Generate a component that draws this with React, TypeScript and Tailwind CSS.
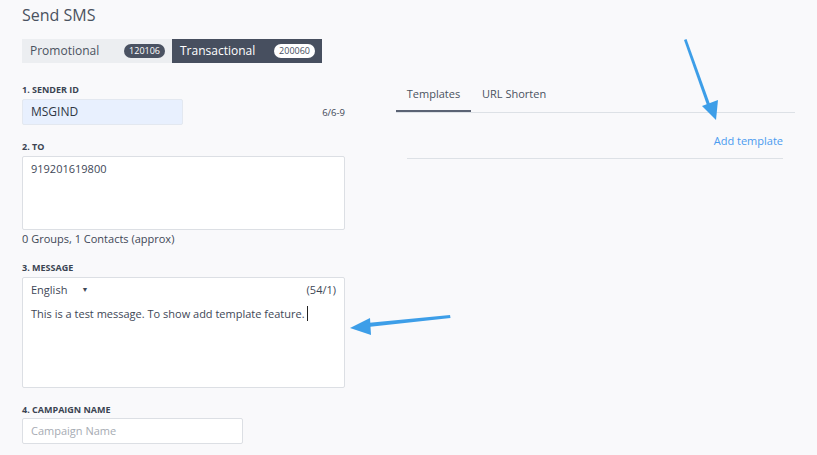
import React from "react";

const font = { fontFamily: '"Open Sans", "Liberation Sans", sans-serif' };

function Label({ children }: { children: React.ReactNode }) {
  return <div className="text-[9px] font-bold uppercase leading-[12px] text-[#3b4452]">{children}</div>;
}

export default function App() {
  return (
    <div style={font} className="relative h-[455px] w-[817px] overflow-hidden bg-[#f9f9fb] text-[#3e4756]">
      <div className="flex">
        {/* left column */}
        <div className="w-[345px] shrink-0 pl-[22px]">
          <h1 className="mt-[3px] text-[16px] leading-[24px] text-[#4a5260]">Send SMS</h1>

          <div className="mt-[12px] flex h-[24px] w-[300px] text-[12px]">
            <div className="flex w-[150px] items-center justify-between bg-[#eceef1] pl-[8px] pr-[7px] text-[#4a5260]">
              <span>Promotional</span>
              <span className="rounded-full bg-[#4a5262] px-[5px] text-[9px] leading-[14px] text-white">120106</span>
            </div>
            <div className="flex w-[150px] items-center justify-between bg-[#474f5f] pl-[8px] pr-[7px] text-white">
              <span>Transactional</span>
              <span className="rounded-full bg-white px-[5px] text-[9px] leading-[14px] text-[#474f5f]">200060</span>
            </div>
          </div>

          <div className="mt-[21px]">
            <Label>1. Sender ID</Label>
          </div>
          <div className="mt-[3px] flex items-center justify-between">
            <div className="flex h-[26px] w-[161px] items-center rounded-[2px] border border-[#e3e8f0] bg-[#e8f0fe] px-[8px] text-[12px] text-[#2f3744]">
              MSGIND
            </div>
            <span className="pt-[2px] text-[9.5px] font-medium text-[#3e4756]">6/6-9</span>
          </div>

          <div className="mt-[16px]">
            <Label>2. TO</Label>
          </div>
          <div className="mt-[3px] h-[74px] w-[323px] rounded-[2px] border border-[#dcdfe4] bg-white px-[8px] py-[5px] text-[11px] leading-[14px] text-[#3e4756]">
            919201619800
          </div>
          <div className="mt-[2px] text-[11px] leading-[14px] text-[#3e4756]">0 Groups, 1 Contacts (approx)</div>

          <div className="mt-[16px]">
            <Label>3. Message</Label>
          </div>
          <div className="mt-[3px] h-[111px] w-[323px] rounded-[2px] border border-[#dcdfe4] bg-white px-[8px] py-[5px] text-[11px] leading-[14px] text-[#3e4756]">
            <div className="flex items-center justify-between">
              <div className="flex items-center">
                <span className="text-[11px]">English</span>
                <span className="ml-[14px] text-[7px]">▼</span>
              </div>
              <span className="text-[11px]">(54/1)</span>
            </div>
            <div className="mt-[9px] flex items-center text-[11px]">
              This is a test message. To show add template feature.
              <span className="ml-[2px] inline-block h-[15px] w-px bg-[#222]" />
            </div>
          </div>

          <div className="mt-[16px]">
            <Label>4. Campaign Name</Label>
          </div>
          <div className="mt-[2px] flex h-[26px] w-[221px] items-center rounded-[2px] border border-[#dcdfe4] bg-white px-[8px] text-[11px] text-[#a6abb3]">
            Campaign Name
          </div>
        </div>

        {/* right column */}
        <div className="ml-[51px] w-[399px] pt-[86px]">
          <div className="flex border-b border-[#dde1e6] text-[11px] text-[#4a5260]">
            <div className="w-[75px] border-b-2 border-[#5b6374] pb-[7px] text-center">Templates</div>
            <div className="ml-[2px] pb-[7px] pl-[9px]">URL Shorten</div>
          </div>
          <div className="ml-[11px] mr-[12px] mt-[20px] border-b border-[#dde1e6] pb-[9px] text-right text-[11px] text-[#4a9bf0]">
            Add template
          </div>
        </div>
      </div>

      {/* annotation arrows */}
      <svg className="pointer-events-none absolute inset-0" width="817" height="455">
        <polygon points="684,40 686.5,39 711,107 708,108" fill="#3d9ee8" />
        <polygon points="702,106 718,100 716,120" fill="#3d9ee8" />
        <polygon points="450,315 450.5,318 368,327 367,323" fill="#3d9ee8" />
        <polygon points="370,318 371,335 350,328" fill="#3d9ee8" />
      </svg>
    </div>
  );
}
